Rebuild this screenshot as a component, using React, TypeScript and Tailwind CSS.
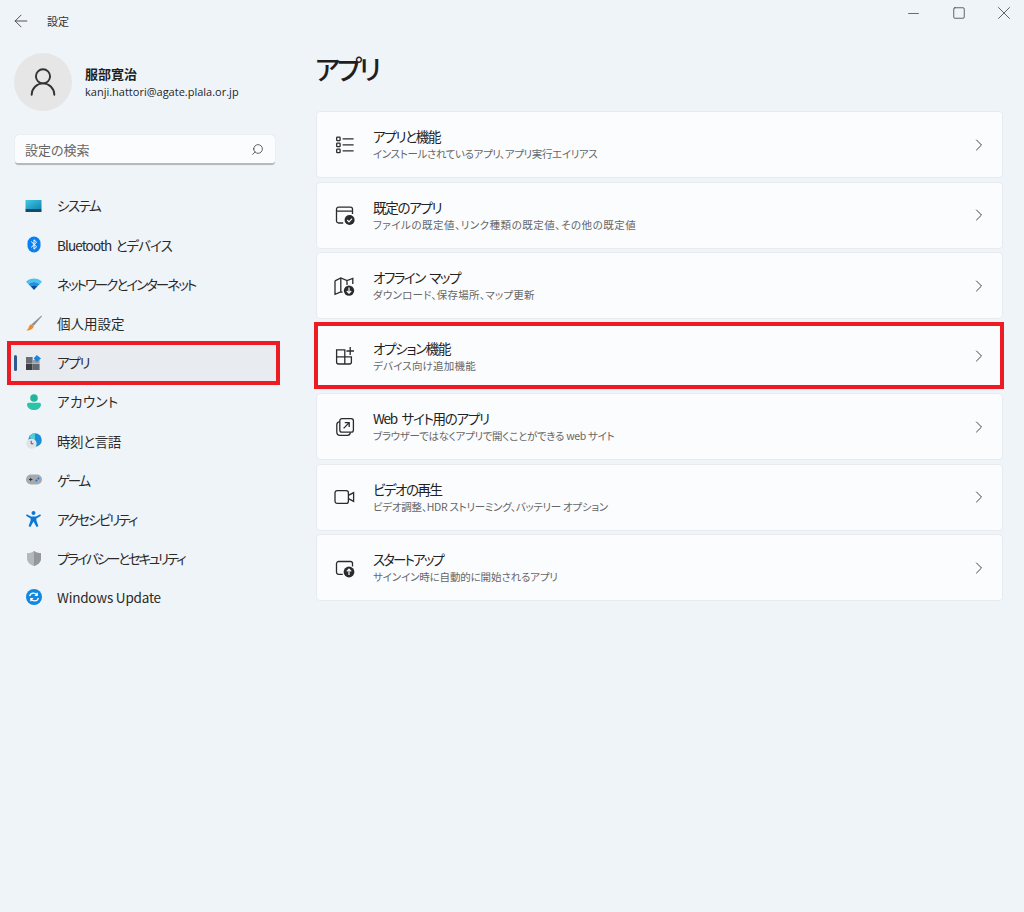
import React from 'react';
import { ArrowLeft, ChevronRight, Minus, Search, Square, UserRound, X } from 'lucide-react';

const stroke = { fill: 'none', stroke: '#2b2b2b', strokeWidth: 1.3 };

const SystemIcon = () => (
  <svg width="17" height="14" viewBox="0 0 17 14">
    <defs>
      <linearGradient id="sys" x1="0" y1="0" x2="1" y2="1">
        <stop offset="0" stopColor="#45c8e0" />
        <stop offset="1" stopColor="#0f86b8" />
      </linearGradient>
    </defs>
    <rect x="0.5" y="1" width="16" height="9" fill="url(#sys)" />
    <rect x="0.5" y="10" width="16" height="3" fill="#164a68" />
  </svg>
);

const BluetoothIcon = () => (
  <svg width="14" height="17" viewBox="0 0 14 17">
    <rect x="0.5" y="0.5" width="13" height="16" rx="6.5" fill="#0a7ff0" />
    <path d="M4.2 5.6 9.6 10.8 7 13.2V3.8L9.6 6.2 4.2 11.4" fill="none" stroke="#fff" strokeWidth="1" />
  </svg>
);

const WifiIcon = () => (
  <svg width="16" height="12" viewBox="0 0 16 12">
    <path d="M0 3.7C4.5-.6 11.5-.6 16 3.7L13.6 6.2C10.4 3.2 5.6 3.2 2.4 6.2Z" fill="#4cc2ee" />
    <path d="M2.4 6.2C5.6 3.2 10.4 3.2 13.6 6.2L11.3 8.6C9.4 6.9 6.6 6.9 4.7 8.6Z" fill="#1a94e0" />
    <path d="M4.7 8.6C6.6 6.9 9.4 6.9 11.3 8.6L8 12Z" fill="#0b4f9e" />
  </svg>
);

const BrushIcon = () => (
  <svg width="16" height="16" viewBox="0 0 16 16">
    <path d="M15.5.5 16 1.2 7.6 11 5.6 9.3Z" fill="#8d8f93" />
    <path d="M5.4 9.2 7.7 11.2C7.2 13.8 4 15.6.4 15.4 2.2 14.2 2.6 13 3 11.6 3.4 10.4 4.2 9.6 5.4 9.2Z" fill="#ed8a2e" />
  </svg>
);

const AppsIcon = () => (
  <svg width="15" height="15" viewBox="0 0 15 15">
    <rect x="0" y="2" width="6.6" height="6.3" fill="#6a6d73" />
    <rect x="0" y="8.7" width="6.6" height="6.3" fill="#3a3d42" />
    <rect x="7" y="8.7" width="6.6" height="6.3" fill="#65686e" />
    <rect x="7" y="5" width="6.6" height="3.3" fill="#9a9da2" />
    <path d="M10.8 0 15 3.4 10.8 7 7.6 3.4Z" fill="#1b86d8" />
  </svg>
);

const AccountIcon = () => (
  <svg width="14" height="16" viewBox="0 0 14 16">
    <circle cx="7" cy="4" r="3.8" fill="#22b59c" />
    <path d="M0 10.5C0 9.4.9 8.8 2 8.8H12C13.1 8.8 14 9.4 14 10.5 14 14 10.5 16 7 16S0 14 0 10.5Z" fill="#2bc4a8" />
  </svg>
);

const TimeIcon = () => (
  <svg width="16" height="16" viewBox="0 0 16 16">
    <circle cx="9" cy="7" r="6.8" fill="#1b8fd6" />
    <path d="M9 .2A6.8 6.8 0 0 0 3 4L9 7Z" fill="#4fd0d8" />
    <circle cx="5.4" cy="10.6" r="5.2" fill="#e3e3e6" />
    <path d="M5.2 7.8V10.8H7.4" fill="none" stroke="#55585e" strokeWidth="1" />
  </svg>
);

const GameIcon = () => (
  <svg width="16" height="11" viewBox="0 0 16 11">
    <rect x="0" y="0.5" width="16" height="10" rx="5" fill="#a6a9b0" />
    <path d="M3 5.5H6.4M4.7 3.8V7.2" stroke="#33363b" strokeWidth="1" />
    <circle cx="10.4" cy="6.4" r="1" fill="#1872cc" />
    <circle cx="12.4" cy="4.4" r="1" fill="#1872cc" />
  </svg>
);

const AccessIcon = () => (
  <svg width="15" height="16" viewBox="0 0 15 16">
    <circle cx="7.5" cy="2" r="2" fill="#0d78d4" />
    <path d="M.8 3.2 5 5.4H10L14.2 3.2 15 4.8 10.4 7.4V9.4L12.4 15.2 10.6 16 7.5 10.6 4.4 16 2.6 15.2 4.6 9.4V7.4L0 4.8Z" fill="#0d78d4" />
  </svg>
);

const ShieldIcon = () => (
  <svg width="14" height="15" viewBox="0 0 14 15">
    <path d="M7 0C9 1.4 11.4 2.2 14 2.3V7.4C14 11 11 13.6 7 15 3 13.6 0 11 0 7.4V2.3C2.6 2.2 5 1.4 7 0Z" fill="#b4b7bc" />
    <path d="M7 0C9 1.4 11.4 2.2 14 2.3V7.4C14 11 11 13.6 7 15Z" fill="#94979c" />
  </svg>
);

const UpdateIcon = () => (
  <svg width="16" height="16" viewBox="0 0 16 16">
    <circle cx="8" cy="8" r="8" fill="#1287e0" />
    <path d="M3.6 7.2C4 5.2 6 4 8 4.2 9.4 4.3 10.6 5 11.2 6.2M11.2 3.8V6.4H8.8M12.4 8.8C12 10.8 10 12 8 11.8 6.6 11.7 5.4 11 4.8 9.8M4.8 12.2V9.6H7.2" fill="none" stroke="#fff" strokeWidth="1.2" />
  </svg>
);

const ListIcon = () => (
  <svg width="20" height="20" viewBox="0 0 20 20" {...stroke}>
    <rect x="1.7" y="2.2" width="3.4" height="3.4" rx=".6" />
    <rect x="1.7" y="8.2" width="3.4" height="3.4" rx=".6" />
    <rect x="1.7" y="14.2" width="3.4" height="3.4" rx=".6" />
    <path d="M7.6 3.9H18.6M7.6 9.9H18.6M7.6 15.9H18.6" />
  </svg>
);

const DefaultAppIcon = () => (
  <svg width="20" height="20" viewBox="0 0 20 20">
    <path d="M8.2 18H3.6C2.4 18 1.5 17.1 1.5 15.9V4.2C1.5 3 2.4 2.1 3.6 2.1H15.4C16.6 2.1 17.5 3 17.5 4.2V9M1.5 6.1H17.5" {...stroke} />
    <circle cx="14.6" cy="15" r="5" fill="#2b2b2b" />
    <path d="M12.2 15 14 16.8 17 13.6" fill="none" stroke="#fff" strokeWidth="1.2" />
  </svg>
);

const MapIcon = () => (
  <svg width="21" height="20" viewBox="0 0 21 20">
    <path d="M1 4.8 6.8 2 13 4.6 18.8 2.4V8M6.8 2V16M13 4.6V9M8.6 16.2 6.8 16 1 18.4V4.8" {...stroke} />
    <circle cx="15" cy="14.6" r="5.2" fill="#2b2b2b" />
    <path d="M15 11.6V17M12.8 15 15 17.2 17.2 15" fill="none" stroke="#fff" strokeWidth="1.2" />
  </svg>
);

const AddonIcon = () => (
  <svg width="20" height="20" viewBox="0 0 20 20" {...stroke}>
    <path d="M1.6 3.8H9.8V18H3.6C2.5 18 1.6 17.1 1.6 16ZM1.6 10.8H16.4V16C16.4 17.1 15.5 18 14.4 18H9.8M15.2 1V9M11.4 5H19" />
  </svg>
);

const WebAppIcon = () => (
  <svg width="20" height="20" viewBox="0 0 20 20" {...stroke}>
    <rect x="4.8" y="1.6" width="13.6" height="13.6" rx="2.2" />
    <path d="M4.8 4.6C3 4.8 1.8 6 1.8 7.8V15C1.8 17 3 18.4 5 18.4H12.4C14 18.4 15.2 17.2 15.4 15.4M8.6 11.4 14.2 5.6M9.8 5.6H14.2V10" />
  </svg>
);

const VideoIcon = () => (
  <svg width="21" height="20" viewBox="0 0 21 20" {...stroke}>
    <rect x="1" y="3.6" width="13.4" height="12.8" rx="2.2" />
    <path d="M14.4 8.4 19.6 5.6V14.4L14.4 11.6" />
  </svg>
);

const StartupIcon = () => (
  <svg width="20" height="20" viewBox="0 0 20 20">
    <path d="M7.8 16.4H3.6C2.4 16.4 1.5 15.5 1.5 14.3V5.6C1.5 4.4 2.4 3.5 3.6 3.5H15.4C16.6 3.5 17.5 4.4 17.5 5.6V8.6" {...stroke} />
    <circle cx="14" cy="14" r="5.4" fill="#2b2b2b" />
    <path d="M14 17V11.4M11.8 13.4 14 11.2 16.2 13.4" fill="none" stroke="#fff" strokeWidth="1.2" />
  </svg>
);

const navItems = [
  { label: 'システム', icon: <SystemIcon />, track: 'tracking-[-1.5px]' },
  { label: 'Bluetooth とデバイス', icon: <BluetoothIcon />, track: 'tracking-[-0.9px] [word-spacing:2px]' },
  { label: 'ネットワークとインターネット', icon: <WifiIcon />, track: 'tracking-[-2px]' },
  { label: '個人用設定', icon: <BrushIcon />, track: '' },
  { label: 'アプリ', icon: <AppsIcon />, track: 'tracking-[-1.2px]', active: true },
  { label: 'アカウント', icon: <AccountIcon />, track: 'tracking-[0.4px]' },
  { label: '時刻と言語', icon: <TimeIcon />, track: 'tracking-[-0.4px]' },
  { label: 'ゲーム', icon: <GameIcon />, track: 'tracking-[-2.2px]' },
  { label: 'アクセシビリティ', icon: <AccessIcon />, track: 'tracking-[-1.9px]' },
  { label: 'プライバシーとセキュリティ', icon: <ShieldIcon />, track: 'tracking-[-2.2px]' },
  { label: 'Windows Update', icon: <UpdateIcon />, track: 'tracking-[-0.2px]' },
];

const cards = [
  { title: 'アプリと機能', sub: 'インストールされているアプリ、アプリ実行エイリアス', icon: <ListIcon />, titleTrack: 'tracking-[-1.3px]', subTrack: 'tracking-[-0.36px]' },
  { title: '既定のアプリ', sub: 'ファイルの既定値、リンク種類の既定値、その他の既定値', icon: <DefaultAppIcon />, titleTrack: 'tracking-[-1.3px]', subTrack: 'tracking-[0.5px]' },
  { title: 'オフライン マップ', sub: 'ダウンロード、保存場所、マップ更新', icon: <MapIcon />, titleTrack: 'tracking-[-1.5px] [word-spacing:3px]', subTrack: 'tracking-[0.24px]' },
  { title: 'オプション機能', sub: 'デバイス向け追加機能', icon: <AddonIcon />, titleTrack: 'tracking-[-1.3px]', subTrack: 'tracking-[0.2px]' },
  { title: 'Web サイト用のアプリ', sub: 'ブラウザーではなくアプリで開くことができる web サイト', icon: <WebAppIcon />, titleTrack: 'tracking-[-1.3px] [word-spacing:3px]', subTrack: 'tracking-[-0.3px]' },
  { title: 'ビデオの再生', sub: 'ビデオ調整、HDR ストリーミング、バッテリー オプション', icon: <VideoIcon />, titleTrack: 'tracking-[-1.5px]', subTrack: 'tracking-[-0.28px]' },
  { title: 'スタートアップ', sub: 'サインイン時に自動的に開始されるアプリ', icon: <StartupIcon />, titleTrack: 'tracking-[-1.9px]', subTrack: 'tracking-[-0.15px]' },
];

const App = () => {
  return (
    <div className="relative flex h-[912px] w-[1024px] overflow-hidden bg-[#eff4f9] font-['Noto_Sans_CJK_JP','Noto_Sans',sans-serif] text-[#1f1f1f] [font-feature-settings:'palt']">
      <aside className="flex w-[300px] shrink-0 flex-col">
        <div className="flex h-[42px] items-center pl-[11px]">
          <ArrowLeft size={20} strokeWidth={1.1} className="text-[#444]" />
          <span className="ml-[16px] text-[11px] text-[#333]">設定</span>
        </div>
        <div className="ml-[14px] mt-[11px] flex items-center">
          <div className="flex h-[58px] w-[58px] items-center justify-center rounded-full bg-[#e6e6e6]">
            <UserRound size={34} strokeWidth={1.35} className="text-[#333]" />
          </div>
          <div className="ml-[13px]">
            <div className="text-[13px] leading-[18px] font-bold">服部寛治</div>
            <div className="font-['Open_Sans','Noto_Sans',sans-serif] text-[11px] leading-[17px]">kanji.hattori@agate.plala.or.jp</div>
          </div>
        </div>
        <div className="ml-[15px] mt-[24px] flex h-[30px] w-[260px] items-center justify-between rounded-[4px] border-b-2 border-[#b5b9bd] bg-[#fbfcfe] pl-[10px] pr-[11px] shadow-[0_0_1px_rgba(0,0,0,0.2)]">
          <span className="pt-[1px] text-[13px] text-[#666]">設定の検索</span>
          <Search size={13} strokeWidth={1.4} className="-scale-x-100 text-[#333]" />
        </div>
        <nav className="mt-[21px] ml-[11px] flex w-[266px] flex-col">
          {navItems.map((item) => (
            <div
              key={item.label}
              className={`relative flex h-[39.2px] items-center rounded-[4px] ${item.active ? 'bg-[#e8ebf0]' : ''}`}
            >
              {item.active && <span className="absolute left-[3px] top-[12px] h-[16px] w-[3px] rounded-full bg-[#2d5a8c]" />}
              <span className="flex w-[45px] justify-center">{item.icon}</span>
              <span className={`ml-[1px] text-[13.5px] text-[#2a2a2a] ${item.track}`}>{item.label}</span>
            </div>
          ))}
        </nav>
      </aside>

      <main className="flex-1 pl-[16px] pr-[21px]">
        <h1 className="-ml-[1px] mt-[50px] h-[61px] text-[27px] leading-[38px] font-medium tracking-[-3px]">アプリ</h1>
        <div className="flex flex-col gap-[3.5px]">
          {cards.map((card) => (
            <div
              key={card.title}
              className="flex h-[67px] items-center rounded-[4px] border border-[#e7ebf0] bg-[#fbfcfe] pl-[17px] pr-[13px]"
            >
              <span className="flex w-[21px] justify-center">{card.icon}</span>
              <div className="ml-[18px] flex-1">
                <div className={`relative top-[-1px] text-[13.5px] leading-[18px] text-[#222] ${card.titleTrack}`}>{card.title}</div>
                <div className={`text-[10.5px] leading-[15px] text-[#666] ${card.subTrack}`}>{card.sub}</div>
              </div>
              <ChevronRight size={20} strokeWidth={1.2} className="text-[#444]" />
            </div>
          ))}
        </div>
      </main>

      {/* title bar buttons */}
      <div className="absolute left-[891px] top-[1px] flex text-[#444]">
        <span className="flex h-[24px] w-[45px] items-center justify-center"><Minus size={17} strokeWidth={1.1} /></span>
        <span className="flex h-[24px] w-[45px] items-center justify-center"><Square size={14} strokeWidth={1.4} /></span>
        <span className="flex h-[24px] w-[45px] items-center justify-center"><X size={22} strokeWidth={0.9} /></span>
      </div>

      {/* red annotation boxes */}
      <div className="pointer-events-none absolute left-[7px] top-[341px] h-[44px] w-[273px] border-[4px] border-[#ed1c24]" />
      <div className="pointer-events-none absolute left-[314px] top-[322px] h-[67px] w-[690px] border-[4px] border-[#ed1c24]" />
    </div>
  );
};

export default App;
